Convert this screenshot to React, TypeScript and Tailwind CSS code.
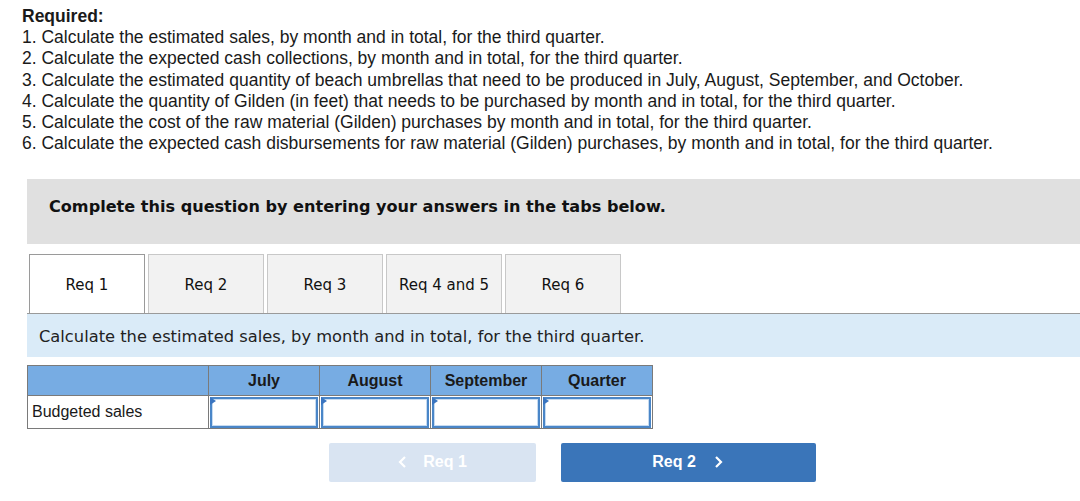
import React from "react";

const lines = [
  "1. Calculate the estimated sales, by month and in total, for the third quarter.",
  "2. Calculate the expected cash collections, by month and in total, for the third quarter.",
  "3. Calculate the estimated quantity of beach umbrellas that need to be produced in July, August, September, and October.",
  "4. Calculate the quantity of Gilden (in feet) that needs to be purchased by month and in total, for the third quarter.",
  "5. Calculate the cost of the raw material (Gilden) purchases by month and in total, for the third quarter.",
  "6. Calculate the expected cash disbursements for raw material (Gilden) purchases, by month and in total, for the third quarter.",
];

const tabs = ["Req 1", "Req 2", "Req 3", "Req 4 and 5", "Req 6"];
const cols = ["July", "August", "September", "Quarter"];

function InputCell() {
  return (
    <td className="border border-[#7a7a7a] p-0 h-[33px]">
      <div className="relative h-[31px] mx-[1px] border-2 border-[#4a86c8] bg-white">
        <div className="absolute inset-0 border border-[#c6dbf1]" />
        <div className="absolute left-[-2px] top-[-2px] w-0 h-0 border-t-[4px] border-b-[4px] border-l-[6px] border-t-transparent border-b-transparent border-l-[#3a75c0]" />
      </div>
    </td>
  );
}

export default function App() {
  return (
    <div className="w-[1080px] h-[501px] bg-white overflow-hidden text-[#222]">
      <div className="pl-[22px] pt-[6px] font-['Liberation_Sans',Arial,sans-serif] text-[17.5px] leading-[21.2px] text-[#1a1a1a]">
        <div className="font-bold">Required:</div>
        {lines.map((l) => (
          <div key={l}>{l}</div>
        ))}
      </div>

      <div className="ml-[27px] mt-[25px] h-[65px] bg-[#e0e0e0] pl-[22px] pt-[18px] font-['DejaVu_Sans',Verdana,sans-serif] font-bold text-[16.1px] leading-[19px] text-[#111]">
        Complete this question by entering your answers in the tabs below.
      </div>

      <div className="ml-[27px] mt-[10px]">
        <div className="flex gap-[3px] pl-[2px] border-b border-[#9a9a9a] font-['DejaVu_Sans',Verdana,sans-serif] text-[15px] text-[#111]">
          {tabs.map((t, i) => (
            <div
              key={t}
              className={
                i === 0
                  ? "w-[116px] h-[59px] pt-[2px] flex items-center justify-center bg-white border border-b-0 border-[#9a9a9a]"
                  : "w-[116px] h-[59px] pt-[2px] flex items-center justify-center bg-[#f2f2f2] border border-b-0 border-[#c8c8c8]"
              }
            >
              {t}
            </div>
          ))}
        </div>
        <div className="h-[43px] pt-[2px] bg-[#daebf8] flex items-center pl-[12px] font-['DejaVu_Sans',Verdana,sans-serif] text-[16.3px] text-[#222]">
          Calculate the estimated sales, by month and in total, for the third quarter.
        </div>

        <table className="mt-[8px] border-collapse font-['Liberation_Sans',Arial,sans-serif] text-[16px]">
          <thead>
            <tr className="bg-[#77ace3] h-[30px]">
              <th className="border border-[#7a7a7a] w-[181px]" />
              {cols.map((c) => (
                <th key={c} className="border border-[#7a7a7a] w-[111px] font-bold text-[#1a1a1a]">
                  {c}
                </th>
              ))}
            </tr>
          </thead>
          <tbody>
            <tr>
              <td className="border border-[#7a7a7a] pl-[4px] text-left text-[#1a1a1a]">Budgeted sales</td>
              {cols.map((c) => (
                <InputCell key={c} />
              ))}
            </tr>
          </tbody>
        </table>

        <div className="flex mt-[14px] ml-[302px] gap-[25px] font-['Liberation_Sans',Arial,sans-serif] font-bold text-[16px] text-white">
          <div className="w-[207px] h-[39px] pb-[2px] rounded-[2px] bg-[#d9e4f2] flex items-center justify-center gap-[16px]">
            <svg width="9" height="14" viewBox="0 0 9 14" fill="none">
              <path d="M7 2 L2 7 L7 12" stroke="white" strokeWidth="2.2" />
            </svg>
            <span>Req 1</span>
          </div>
          <div className="w-[255px] h-[39px] pb-[2px] rounded-[2px] bg-[#3a75b9] flex items-center justify-center gap-[18px] pr-[2px]">
            <span>Req 2</span>
            <svg width="9" height="14" viewBox="0 0 9 14" fill="none">
              <path d="M2 2 L7 7 L2 12" stroke="white" strokeWidth="2.2" />
            </svg>
          </div>
        </div>
      </div>
    </div>
  );
}
